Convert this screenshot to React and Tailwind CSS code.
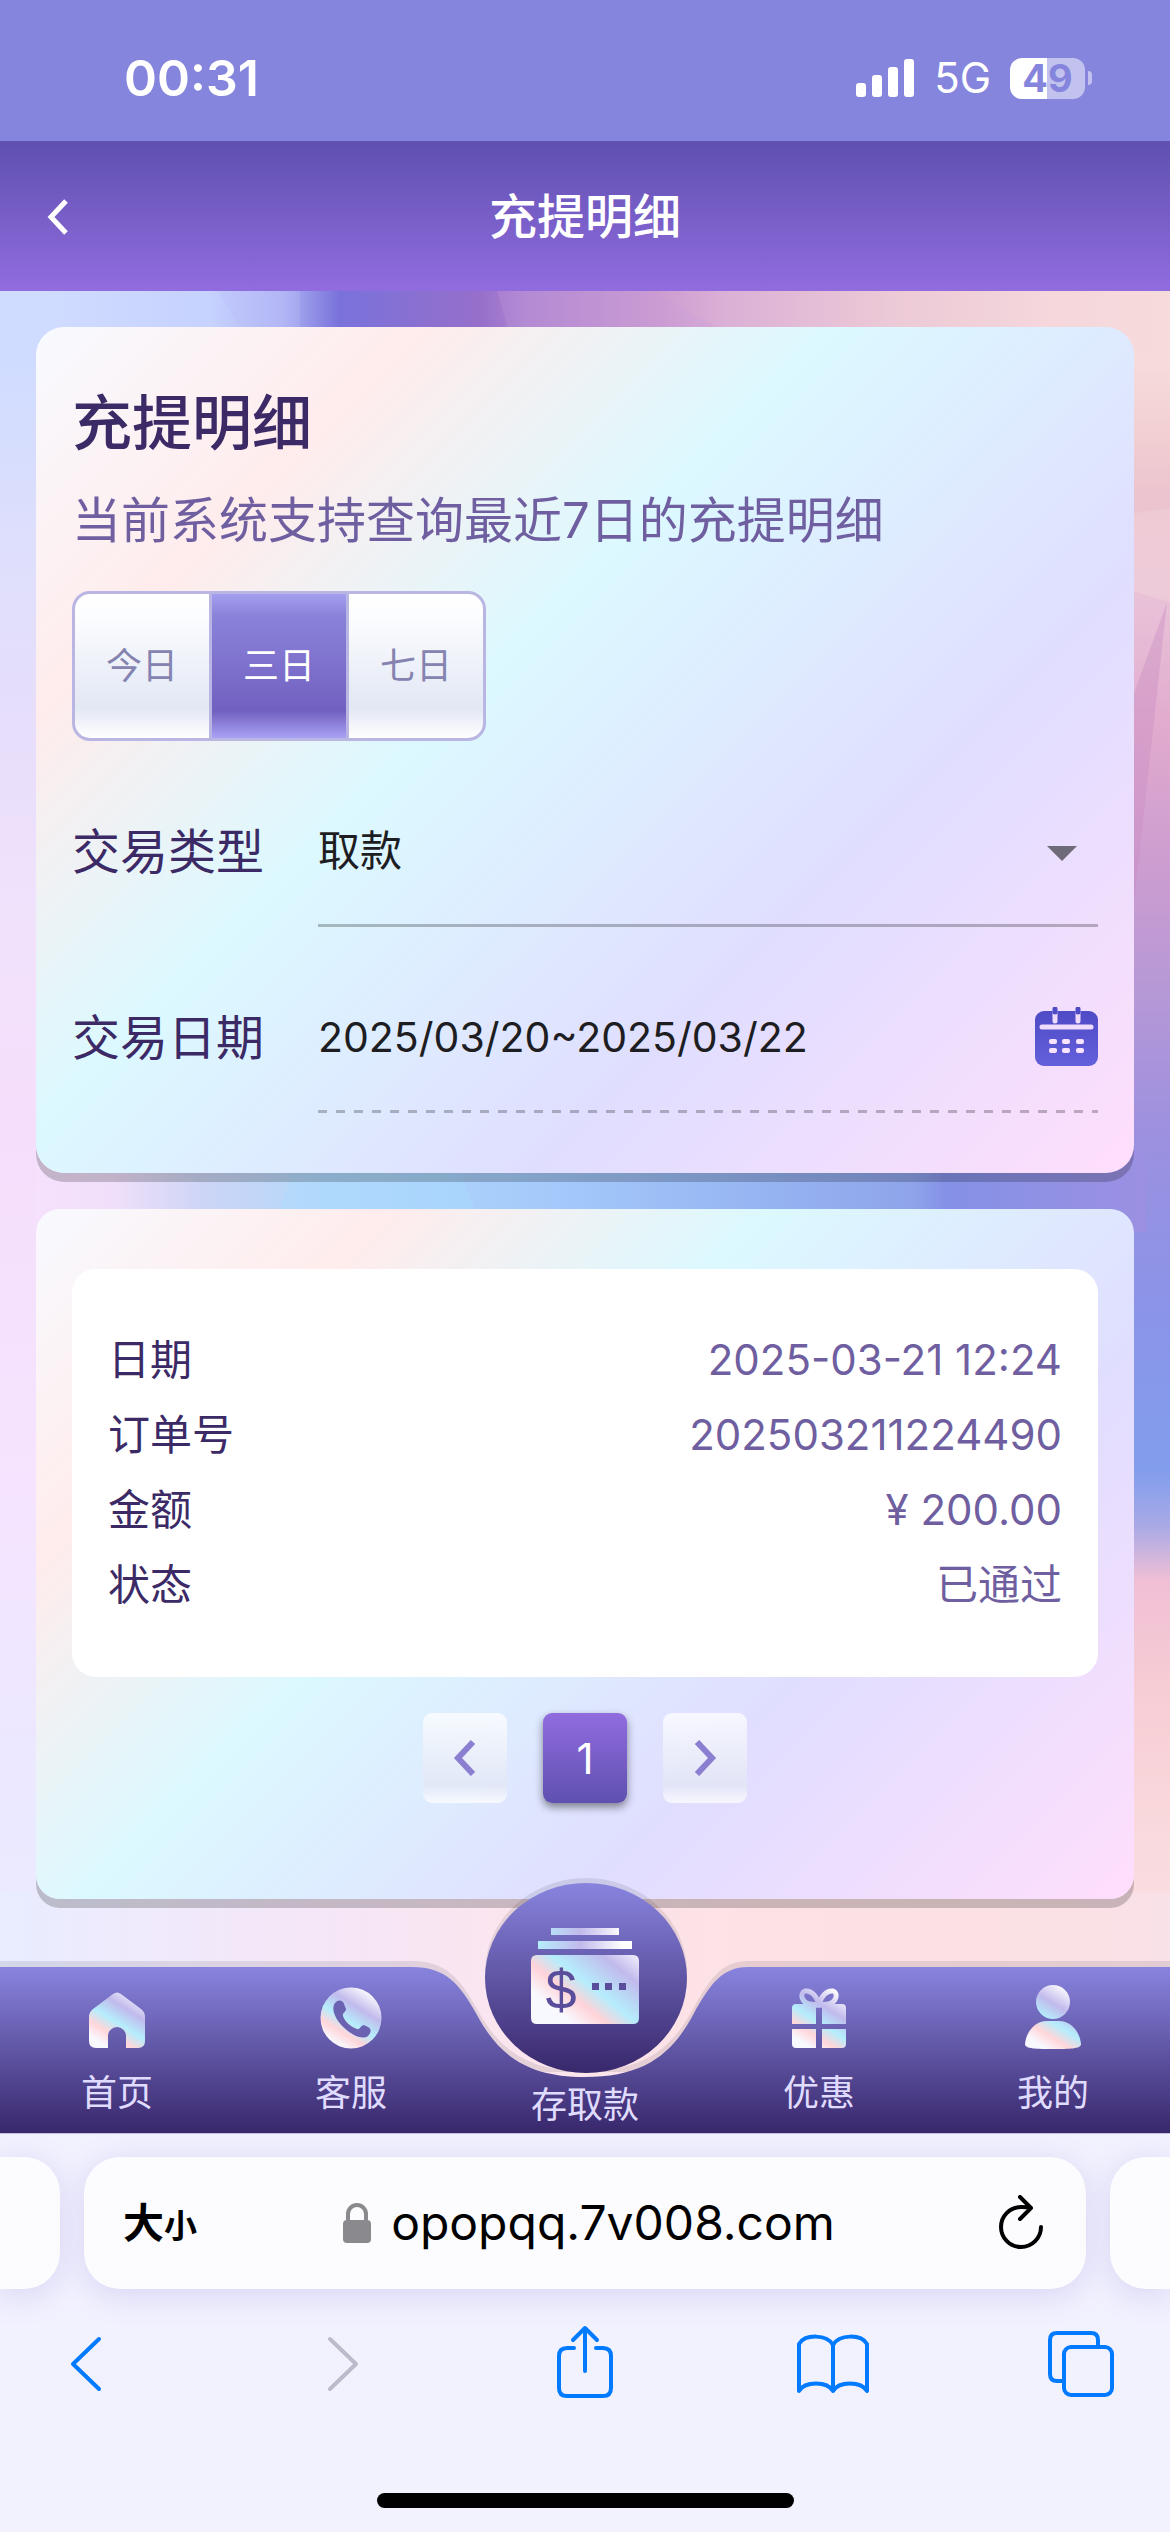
import { useState } from 'react'

const RANGES = ['今日', '三日', '七日']

const RECORD = [
  { label: '日期', value: '2025-03-21 12:24' },
  { label: '订单号', value: '202503211224490' },
  { label: '金额', value: '¥ 200.00' },
  { label: '状态', value: '已通过' },
]

const CARD =
  'bg-[linear-gradient(135deg,#f8faff_0%,#ffecec_20%,#dcf9ff_41%,#e0deff_69%,#ffdefc_100%)] shadow-[0_9px_0_rgba(0,0,0,0.2)]'

function StatusBar() {
  return (
    <div className="flex h-[141px] items-center justify-between bg-[#8685dd] pl-[124px] pr-[78px] pt-[15px] text-white">
      <span className="text-[50px] font-semibold leading-none">00:31</span>
      <div className="flex items-center gap-[19px]">
        <svg width="60" height="40" viewBox="0 0 60 40" fill="currentColor" aria-hidden="true">
          <rect x="1" y="25" width="10" height="14" rx="3" />
          <rect x="17" y="17" width="10" height="22" rx="3" />
          <rect x="33" y="9" width="10" height="30" rx="3" />
          <rect x="49" y="1" width="10" height="38" rx="3" />
        </svg>
        <span className="text-[42px] leading-none">5G</span>
        <div className="flex items-center gap-[3px]">
          <span className="flex h-[41px] w-[75px] items-center justify-center rounded-xl bg-linear-to-r from-white from-50% to-white/50 to-50% text-[38px] font-bold leading-none text-[#8685dd]">
            49
          </span>
          <span className="h-[14px] w-1 rounded-r-full bg-white/50" />
        </div>
      </div>
    </div>
  )
}

function PageHeader() {
  return (
    <header className="grid h-[150px] grid-cols-[120px_1fr_120px] items-center bg-linear-to-b from-[#5f50b0] to-[#916cdf] pt-[2px] text-white">
      <button type="button" aria-label="返回" className="pl-[46px]">
        <svg width="26" height="40" viewBox="0 0 26 40" fill="none" stroke="currentColor" strokeWidth="5" aria-hidden="true">
          <path d="M20 4 5 20l15 16" />
        </svg>
      </button>
      <h1 className="text-center text-[48px] font-medium leading-none">充提明细</h1>
    </header>
  )
}

function Backdrop() {
  return (
    <svg
      className="absolute inset-0 h-full w-full"
      viewBox="0 0 1170 1840"
      preserveAspectRatio="none"
      aria-hidden="true"
    >
      <defs>
        <linearGradient id="bdLeft" x1="0" y1="0" x2="0" y2="1">
          <stop offset="0" stopColor="#d0dcff" />
          <stop offset="0.04" stopColor="#d0dcff" />
          <stop offset="0.14" stopColor="#dedffc" />
          <stop offset="0.25" stopColor="#e8defb" />
          <stop offset="0.34" stopColor="#f1e2fc" />
          <stop offset="0.45" stopColor="#f5defb" />
          <stop offset="0.66" stopColor="#f5e4ff" />
          <stop offset="0.8" stopColor="#ebe8ff" />
          <stop offset="1" stopColor="#ebeeff" />
        </linearGradient>
        <linearGradient id="bdTop" x1="0" y1="0" x2="1" y2="0">
          <stop offset="0" stopColor="#d0dcff" />
          <stop offset="0.03" stopColor="#d0dcff" />
          <stop offset="0.18" stopColor="#c6d2ff" />
          <stop offset="0.24" stopColor="#b0b5f4" />
          <stop offset="0.29" stopColor="#7972db" />
          <stop offset="0.41" stopColor="#966fca" />
          <stop offset="0.45" stopColor="#ad85d2" />
          <stop offset="0.56" stopColor="#cb9bd0" />
          <stop offset="0.62" stopColor="#dbb0d6" />
          <stop offset="0.76" stopColor="#ecc9d6" />
          <stop offset="0.9" stopColor="#f5d7dc" />
          <stop offset="1" stopColor="#f6dbdb" />
        </linearGradient>
        <linearGradient id="bdMid" x1="0" y1="0" x2="1" y2="0">
          <stop offset="0" stopColor="#f6e1fd" />
          <stop offset="0.07" stopColor="#f0dffa" />
          <stop offset="0.15" stopColor="#cdd5f6" />
          <stop offset="0.26" stopColor="#b3d8fa" />
          <stop offset="0.45" stopColor="#a5cbfb" />
          <stop offset="0.62" stopColor="#98b8f3" />
          <stop offset="0.79" stopColor="#8fa4eb" />
          <stop offset="0.82" stopColor="#8491e6" />
          <stop offset="1" stopColor="#9c90e2" />
        </linearGradient>
        <linearGradient id="bdRight" x1="0" y1="0" x2="0" y2="1">
          <stop offset="0" stopColor="#f6dbdb" />
          <stop offset="0.04" stopColor="#f6dbdb" />
          <stop offset="0.07" stopColor="#f3d2d3" />
          <stop offset="0.11" stopColor="#ecc4cf" />
          <stop offset="0.16" stopColor="#eac4d8" />
          <stop offset="0.24" stopColor="#e0aace" />
          <stop offset="0.31" stopColor="#cd9dd0" />
          <stop offset="0.38" stopColor="#b698d6" />
          <stop offset="0.46" stopColor="#9c90e0" />
          <stop offset="0.55" stopColor="#8b94e8" />
          <stop offset="0.64" stopColor="#829dec" />
          <stop offset="0.67" stopColor="#a8a9e6" />
          <stop offset="0.7" stopColor="#f0bfd5" />
          <stop offset="0.76" stopColor="#f7cdd4" />
          <stop offset="0.84" stopColor="#f9dadd" />
          <stop offset="0.92" stopColor="#fbe1e8" />
          <stop offset="1" stopColor="#fbe3ea" />
        </linearGradient>
        <linearGradient id="bdBottom" x1="0" y1="0" x2="1" y2="0">
          <stop offset="0" stopColor="#e8edff" />
          <stop offset="0.12" stopColor="#efeafc" />
          <stop offset="0.3" stopColor="#f6e6f6" />
          <stop offset="0.45" stopColor="#fbe5ee" />
          <stop offset="0.65" stopColor="#fde1e4" />
          <stop offset="0.85" stopColor="#fbe1e3" />
          <stop offset="1" stopColor="#f9e1e8" />
        </linearGradient>
      </defs>
      <rect width="585" height="1840" fill="url(#bdLeft)" />
      <rect x="585" width="585" height="1840" fill="url(#bdRight)" />
      <rect x="0" y="0" width="1170" height="60" fill="url(#bdTop)" />
      <path d="M218 0 254 60H300V0z" fill="#b9bdfa" opacity="0.3" />
      <path d="M497 0 514 60H760L650 0z" fill="#c79bdc" opacity="0.25" />
      <path d="M1134 222 1170 217V311L1134 300z" fill="#f2d6da" opacity="0.4" />
      <path d="M1134 402 1167 311 1134 611z" fill="#c98dc4" opacity="0.4" />
      <rect x="36" y="860" width="1110" height="80" fill="url(#bdMid)" />
      <path d="M292 880 276 930H480L460 880z" fill="#a9dcff" opacity="0.35" />
      <rect x="0" y="1600" width="1170" height="240" fill="url(#bdBottom)" />
    </svg>
  )
}

function FilterCard() {
  const [range, setRange] = useState('三日')

  return (
    <section className={`rounded-[28px] px-9 pb-[60px] pt-[60px] ${CARD}`}>
      <h2 className="text-[60px] font-medium leading-[72px] text-[#3b2a66]">充提明细</h2>
      <p className="mt-[26px] text-[49px] leading-[72px] text-[#6f5fa0]">当前系统支持查询最近7日的充提明细</p>

      <div className="mt-[34px] flex h-[150px] w-fit gap-[3px] overflow-hidden rounded-[18px] border-[3px] border-[#b9b6e4] bg-[#b9b6e4]">
        {RANGES.map((name) => (
          <button
            key={name}
            type="button"
            aria-pressed={name === range}
            onClick={() => setRange(name)}
            className={`w-[134px] text-[36px] ${
              name === range
                ? 'bg-[linear-gradient(180deg,#a49eef_0%,#8a83da_15%,#7260c0_81%,#a8a2f3_100%)] text-white'
                : 'bg-[linear-gradient(180deg,#ffffff_0%,#fcfdff_15%,#e2e7f4_79%,#ffffff_100%)] text-[#8583b0]'
            }`}
          >
            {name}
          </button>
        ))}
      </div>

      <div className="mt-[36px] flex h-[150px] items-center">
        <label htmlFor="tx-type" className="w-[246px] shrink-0 text-[48px] text-[#3b2a66]">
          交易类型
        </label>
        <div className="relative h-full flex-1 border-b-[3px] border-black/25">
          <select
            id="tx-type"
            defaultValue="取款"
            className="h-full w-full appearance-none bg-transparent text-[42px] text-[#1d1d22] outline-none"
          >
            <option>取款</option>
            <option>存款</option>
          </select>
          <span className="pointer-events-none absolute right-[21px] top-[69px] border-x-[15px] border-t-[15px] border-x-transparent border-t-[#6f6a78]" />
        </div>
      </div>

      <div className="mt-[36px] flex h-[150px] items-center">
        <label htmlFor="tx-date" className="w-[246px] shrink-0 text-[48px] text-[#3b2a66]">
          交易日期
        </label>
        <div className="flex h-full min-w-0 flex-1 flex-col">
          <div className="flex flex-1 items-center">
            <input
              id="tx-date"
              readOnly
              value="2025/03/20~2025/03/22"
              className="h-full min-w-0 flex-1 bg-transparent text-[41px] text-[#1d1d22] outline-none"
            />
            <button type="button" aria-label="选择日期">
              <svg width="63" height="60" viewBox="0 0 63 60" aria-hidden="true">
                <defs>
                  <linearGradient id="calFill" x1="0" y1="0" x2="0" y2="1">
                    <stop offset="0" stopColor="#4f4bc6" />
                    <stop offset="1" stopColor="#6460dc" />
                  </linearGradient>
                </defs>
                <rect y="4" width="63" height="55" rx="9" fill="url(#calFill)" />
                <path d="M20 3v11M43 3v11" stroke="#efdcfc" strokeWidth="5" strokeLinecap="round" />
                <path d="M20 2v3M43 2v3" stroke="#4f4bc6" strokeWidth="5" strokeLinecap="round" />
                <path d="M7 20h49" stroke="#efdcfc" strokeWidth="5" strokeLinecap="round" />
                <g fill="#f7e3ff">
                  <rect x="14" y="32" width="8" height="5" rx="2" />
                  <rect x="27" y="32" width="8" height="5" rx="2" />
                  <rect x="41" y="32" width="8" height="5" rx="2" />
                  <rect x="14" y="41" width="8" height="5" rx="2" />
                  <rect x="27" y="41" width="8" height="5" rx="2" />
                  <rect x="41" y="41" width="8" height="5" rx="2" />
                </g>
              </svg>
            </button>
          </div>
          <div className="h-[3px] bg-[repeating-linear-gradient(90deg,rgba(0,0,0,0.25)_0_9px,transparent_9px_18px)]" />
        </div>
      </div>
    </section>
  )
}

function PageArrow({ label, d }) {
  return (
    <button
      type="button"
      aria-label={label}
      className="flex h-[90px] w-[84px] items-center justify-center rounded-[9px] bg-[linear-gradient(180deg,rgba(255,255,255,0.75)_0%,rgba(226,231,244,0.75)_80%,rgba(255,255,255,0.75)_100%)]"
    >
      <svg width="24" height="36" viewBox="0 0 24 36" fill="none" stroke="#8a7fd0" strokeWidth="6" aria-hidden="true">
        <path d={d} />
      </svg>
    </button>
  )
}

function RecordCard() {
  return (
    <section className={`mt-9 rounded-[24px] px-9 pb-24 pt-[60px] ${CARD}`}>
      <dl className="rounded-[24px] bg-white px-9 pb-[55px] pt-[53px] text-[42px] leading-[75px]">
        {RECORD.map((row) => (
          <div key={row.label} className="flex justify-between">
            <dt className="text-[#3b2a66]">{row.label}</dt>
            <dd className="text-[#6f5fa0]">{row.value}</dd>
          </div>
        ))}
      </dl>
      <div className="mt-9 flex justify-center gap-9">
        <PageArrow label="上一页" d="M20 2 5 18l15 16" />
        <button
          type="button"
          aria-current="page"
          className="h-[90px] w-[84px] rounded-[9px] bg-linear-to-b from-[#916cdf] to-[#5f50b0] text-[42px] text-white shadow-[0_4px_8px_rgba(0,0,0,0.45)]"
        >
          1
        </button>
        <PageArrow label="下一页" d="m4 2 15 16L4 34" />
      </div>
    </section>
  )
}

function IconGradients() {
  return (
    <svg className="absolute h-0 w-0" aria-hidden="true">
      <defs>
        <linearGradient id="holo" gradientUnits="userSpaceOnUse" x1="16" y1="62" x2="52" y2="4">
          <stop offset="0.08" stopColor="#f8f9ff" />
          <stop offset="0.27" stopColor="#ffd6da" />
          <stop offset="0.46" stopColor="#b5edfc" />
          <stop offset="0.7" stopColor="#c1baec" />
          <stop offset="1" stopColor="#ffffff" />
        </linearGradient>
        <linearGradient id="holoCard" gradientUnits="userSpaceOnUse" x1="18" y1="92" x2="88" y2="4">
          <stop offset="0.1" stopColor="#f8f9ff" />
          <stop offset="0.29" stopColor="#ffd3d8" />
          <stop offset="0.46" stopColor="#b5edfc" />
          <stop offset="0.74" stopColor="#c1baec" />
          <stop offset="1" stopColor="#ffffff" />
        </linearGradient>
        <linearGradient id="holoStrip" x1="0" y1="0" x2="1" y2="0">
          <stop offset="0" stopColor="#b5edfc" />
          <stop offset="0.45" stopColor="#c1baec" />
          <stop offset="0.9" stopColor="#ffffff" />
        </linearGradient>
        <linearGradient id="barFill" x1="0" y1="0" x2="0" y2="1">
          <stop offset="0" stopColor="#8884de" />
          <stop offset="1" stopColor="#38276b" />
        </linearGradient>
      </defs>
    </svg>
  )
}

function HomeIcon() {
  return (
    <path
      fill="url(#holo)"
      d="M29 7q4-3 8 0l20 15q4 3 4 8v24q0 7-7 7H42V49a9 9 0 0 0-18 0v12H12q-7 0-7-7V30q0-5 4-8z"
    />
  )
}

function PhoneIcon() {
  return (
    <>
      <circle cx="33" cy="31" r="30.5" fill="url(#holo)" />
      <path
        fill="#6c62b2"
        d="M17 16c3-4 8-3 9 1l2 5c0 3-4 4-3 7 2 6 8 11 14 13 3 1 4-4 7-4l4 2c4 2 3 6 0 9-4 3-10 1-14-1-9-5-17-13-20-22-1-4-1-7 1-10z"
      />
    </>
  )
}

function GiftIcon() {
  return (
    <>
      <g fill="none" stroke="url(#holo)" strokeWidth="5">
        <path d="M33 18C31 9 25 3 19 4c-6 2-3 12 5 13z" />
        <path d="M33 18c2-9 8-15 14-14 6 2 3 12-5 13z" />
      </g>
      <path fill="url(#holo)" d="M10 17h20v20H6V21q0-4 4-4zM36 17h20q4 0 4 4v16H36zM6 42h24v19H10q-4 0-4-4zM36 42h24v15q0 4-4 4H36z" />
      <path fill="url(#holo)" d="M27 17h12l-3 3h-6z" />
    </>
  )
}

function UserIcon() {
  return (
    <>
      <circle cx="33" cy="15" r="17" fill="url(#holo)" />
      <path fill="url(#holo)" d="M27 34h12c13 0 21 12 22 23 0 5-12 5-28 5S5 62 5 57c1-11 9-23 22-23z" />
    </>
  )
}

function NavItem({ label, children }) {
  return (
    <a href="#" className="flex flex-col items-center gap-[15px] pb-[13px] text-[36px] leading-[54px] text-[#e0dcff]">
      <svg width="66" height="66" viewBox="0 -2 66 66" aria-hidden="true">
        {children}
      </svg>
      {label}
    </a>
  )
}

function TabNav() {
  return (
    <nav className="relative -mt-[21px] h-[255px]">
      <IconGradients />
      <svg
        className="absolute inset-0 h-full w-full"
        viewBox="0 0 1170 255"
        preserveAspectRatio="xMidYMax slice"
        aria-hidden="true"
      >
        <ellipse cx="586" cy="94" rx="101" ry="94" fill="#000" opacity="0.09" />
        <path
          transform="translate(0 -6)"
          fill="#000"
          opacity="0.09"
          d="M0 89H412C446 89 460 106 477 137 499 178 528 199 585 199 642 199 671 178 693 137 710 106 722 89 748 89H1170V200H0z"
        />
        <path
          fill="url(#barFill)"
          d="M0 89H412C446 89 460 106 477 137 499 178 528 199 585 199 642 199 671 178 693 137 710 106 722 89 748 89H1170V255H0z"
        />
        <ellipse cx="586" cy="100" rx="101" ry="95" fill="url(#barFill)" />
      </svg>
      <div className="relative grid h-full grid-cols-5 items-end">
        <NavItem label="首页">
          <HomeIcon />
        </NavItem>
        <NavItem label="客服">
          <PhoneIcon />
        </NavItem>
        <a href="#" className="flex flex-col items-center gap-[53px] pb-px text-[36px] leading-[54px] text-[#e0dcff]">
          <svg width="108" height="98" viewBox="0 0 108 98" aria-hidden="true">
            <path fill="url(#holoStrip)" d="M20 1h68v7H20zM7 14h94v8H7z" />
            <path fill="url(#holoCard)" d="M6 28h96q6 0 6 6v57q0 6-6 6H6q-6 0-6-6V34q0-6 6-6z" />
            <g fill="#5a4d9b">
              <rect x="61" y="56" width="7" height="7" />
              <rect x="74" y="56" width="7" height="7" />
              <rect x="88" y="56" width="7" height="7" />
              <text x="30" y="82" textAnchor="middle" fontSize="56" className="font-['Liberation_Sans',sans-serif]">
                $
              </text>
            </g>
          </svg>
          存取款
        </a>
        <NavItem label="优惠">
          <GiftIcon />
        </NavItem>
        <NavItem label="我的">
          <UserIcon />
        </NavItem>
      </div>
    </nav>
  )
}

function ToolButton({ label, color = 'text-[#007aff]', children }) {
  return (
    <button type="button" aria-label={label} className={color}>
      <svg
        width="80"
        height="80"
        viewBox="0 0 80 80"
        fill="none"
        stroke="currentColor"
        strokeWidth="4"
        strokeLinecap="round"
        strokeLinejoin="round"
        aria-hidden="true"
      >
        {children}
      </svg>
    </button>
  )
}

function BrowserBar() {
  const pill = 'bg-[#fcfcfe] shadow-[0_6px_30px_rgba(120,120,210,0.22)]'

  return (
    <footer className="overflow-hidden border-t border-[#c5c0dd] bg-[#f2f1fe] pb-6 pt-[23px]">
      <div className="flex h-[132px] gap-6">
        <div className={`w-[60px] rounded-r-[36px] ${pill}`} />
        <div
          className={`grid flex-1 grid-cols-[75px_1fr_64px] items-center rounded-[36px] pl-[39px] pr-[42px] text-black ${pill}`}
        >
          <button type="button" className="flex items-baseline whitespace-nowrap font-bold leading-none">
            <span className="text-[41px]">大</span>
            <span className="text-[33px]">小</span>
          </button>
          <button type="button" className="flex items-center justify-center gap-[20px] text-[48px] leading-none">
            <svg width="28" height="40" viewBox="0 0 28 40" aria-hidden="true">
              <rect y="17" width="28" height="23" rx="4" fill="#8a8a8e" />
              <path d="M5 19v-8a9 9 0 0 1 18 0v8" fill="none" stroke="#8a8a8e" strokeWidth="4" />
            </svg>
            opopqq.7v008.com
          </button>
          <button type="button" aria-label="重新载入" className="justify-self-end">
            <svg
              width="46"
              height="56"
              viewBox="0 0 46 56"
              fill="none"
              stroke="currentColor"
              strokeWidth="4"
              strokeLinecap="round"
              strokeLinejoin="round"
              aria-hidden="true"
            >
              <path d="M43 32a20 20 0 1 1-20-20c4 0 7 0 10 1M22 2l11 11-11 11" />
            </svg>
          </button>
        </div>
        <div className={`w-[60px] rounded-l-[36px] ${pill}`} />
      </div>
      <div className="mt-[35px] flex justify-between px-[46px]">
        <ToolButton label="后退">
          <path d="M53 15 27 40l26 25" />
        </ToolButton>
        <ToolButton label="前进" color="text-[#bcbbcb]">
          <path d="m34 15 26 25-26 25" />
        </ToolButton>
        <ToolButton label="分享">
          <path d="M29 24h-7q-8 0-8 8v32q0 8 8 8h36q8 0 8-8V32q0-8-8-8h-7M40 47V5M28 16 40 4l12 12" />
        </ToolButton>
        <ToolButton label="书签">
          <path d="M38 21C32 10 10 10 4 20v47c6-10 28-10 34 0 6-10 28-10 34 0V20c-6-10-28-10-34 1v46" />
        </ToolButton>
        <ToolButton label="标签页">
          <path d="M18 57h-5q-7 0-7-7V16q0-7 7-7h34q7 0 7 7v7" />
          <rect x="20" y="23" width="48" height="48" rx="7" />
        </ToolButton>
      </div>
      <div className="mx-auto mt-[89px] h-[15px] w-[417px] rounded-full bg-black" />
    </footer>
  )
}

export default function App() {
  return (
    <div className="flex min-h-screen flex-col font-[Inter,'Noto_Sans_CJK_SC',sans-serif]">
      <StatusBar />
      <PageHeader />
      <main className="relative flex-1">
        <Backdrop />
        <div className="relative px-9 pt-9">
          <FilterCard />
          <RecordCard />
        </div>
        <TabNav />
      </main>
      <BrowserBar />
    </div>
  )
}
